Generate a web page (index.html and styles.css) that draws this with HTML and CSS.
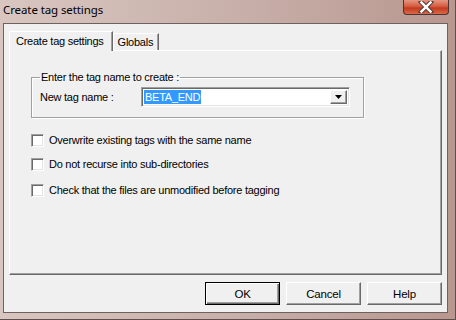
FILE: index.html
```html
<!DOCTYPE html>
<html lang="en">
<head>
  <meta charset="UTF-8">
  <title>Create tag settings</title>
  <link rel="stylesheet" href="styles.css">
</head>
<body>
  <div class="window">
    <div class="titlebar">
      <span class="title">Create tag settings</span>
      <span class="close">
        <svg width="16" height="12" viewBox="0 0 16 12">
          <path d="M3 1 L13 11 M13 1 L3 11" stroke="#4a3c3a" stroke-width="4.4" stroke-linecap="square"/>
          <path d="M3.4 1.4 L12.6 10.6 M12.6 1.4 L3.4 10.6" stroke="#fff" stroke-width="2.4" stroke-linecap="square"/>
        </svg>
      </span>
    </div>
    <div class="client">
      <div class="tabs">
        <div class="tab active">Create tag settings</div>
        <div class="tab">Globals</div>
      </div>
      <div class="panel">
        <fieldset class="group">
          <legend>Enter the tag name to create :</legend>
          <div class="field">
            <label>New tag name :</label>
            <div class="combo">
              <span class="value"><span class="selected">BETA_END</span></span>
              <span class="drop">
                <svg width="7" height="4" viewBox="0 0 7 4"><path d="M0 0 H7 L3.5 4 Z" fill="#000"/></svg>
              </span>
            </div>
          </div>
        </fieldset>
        <div class="checks">
          <label class="check"><span class="box"></span>Overwrite existing tags with the same name</label>
          <label class="check"><span class="box"></span>Do not recurse into sub-directories</label>
          <label class="check"><span class="box"></span>Check that the files are unmodified before tagging</label>
        </div>
      </div>
      <div class="buttons">
        <button class="default">OK</button>
        <button>Cancel</button>
        <button>Help</button>
      </div>
    </div>
  </div>
</body>
</html>
```

FILE: styles.css
```css
body {
  margin: 0;
  width: 456px;
  height: 320px;
  overflow: hidden;
  background: #fff;
  font-family: "Liberation Sans", Arial, sans-serif;
  font-size: 11px;
  letter-spacing: -0.25px;
  color: #000;
}
.window {
  box-sizing: border-box;
  width: 456px;
  height: 320px;
  padding: 0 7px 6px 3px;
  background: linear-gradient(to right, #d9c6c1, #c7aea8 55%, #b8978f);
  border-right: 1px solid #5f4e4b;
  border-bottom: 1px solid #5f4e4b;
  display: flex;
  flex-direction: column;
}
.titlebar {
  height: 24px;
  display: flex;
  justify-content: space-between;
  align-items: flex-start;
}
.title {
  font-family: "Noto Sans", sans-serif;
  font-size: 11.5px;
  letter-spacing: -0.1px;
  margin-top: 2px;
  color: #000;
}
.close {
  width: 46px;
  height: 16px;
  margin-top: -1px;
  margin-right: -1px;
  box-sizing: border-box;
  border: 1px solid #4c3432;
  border-top: none;
  border-radius: 0 0 4px 4px;
  background: linear-gradient(to bottom, #e8a08c, #d45a3e 50%, #c23a1e 60%, #d86a48);
  display: flex;
  justify-content: center;
  align-items: center;
}
.client {
  flex: 1;
  background: #f0f0f0;
  border: 1px solid #6e6260;
  padding: 7px 5px 7px 5px;
  display: flex;
  flex-direction: column;
}
.tabs {
  display: flex;
  align-items: flex-end;
  height: 19px;
}
.tab {
  box-sizing: border-box;
  height: 17px;
  padding: 1px 5px 0 4px;
  border-top: 1px solid #fff;
  border-left: 1px solid #fff;
  border-right: 1px solid #696969;
  box-shadow: inset -1px 0 #a0a0a0;
  background: #f0f0f0;
  line-height: 15px;
}
.tab.active {
  height: 20px;
  margin-bottom: -1px;
  padding: 2px 8px 0 6px;
  position: relative;
  z-index: 1;
}
.panel {
  height: 225px;
  box-sizing: border-box;
  border-top: 1px solid #fff;
  border-left: 1px solid #fff;
  border-right: 1px solid #696969;
  border-bottom: 1px solid #696969;
  box-shadow: inset -1px -1px #a0a0a0;
  padding: 20px 0 0 21px;
}
.group {
  box-sizing: border-box;
  width: 333px;
  height: 47px;
  margin: 0;
  padding: 4px 0 0 8px;
  border: 1px solid #a0a0a0;
  box-shadow: inset 1px 1px #fff, 1px 1px #fff;
}
.group legend {
  padding: 0 1px;
  margin-left: 0;
}
.field {
  display: flex;
  align-items: center;
}
.field label {
  width: 101px;
}
.combo {
  box-sizing: border-box;
  width: 209px;
  height: 20px;
  display: flex;
  background: #fff;
  border-top: 1px solid #a0a0a0;
  border-left: 1px solid #a0a0a0;
  border-right: 1px solid #fff;
  border-bottom: 1px solid #fff;
  box-shadow: inset 1px 1px #696969, inset -1px -1px #e3e3e3;
  padding: 2px;
}
.value {
  flex: 1;
  display: flex;
  align-items: center;
}
.selected {
  background: #3399ff;
  color: #fff;
  line-height: 14px;
  padding: 0 1px;
}
.drop {
  width: 17px;
  box-sizing: border-box;
  background: #f0f0f0;
  border-top: 1px solid #fff;
  border-left: 1px solid #fff;
  border-right: 1px solid #696969;
  border-bottom: 1px solid #696969;
  box-shadow: inset -1px -1px #a0a0a0;
  display: flex;
  justify-content: center;
  align-items: center;
}
.checks {
  display: flex;
  flex-direction: column;
  gap: 10px;
  margin-top: 15px;
}
.check {
  display: flex;
  align-items: center;
  gap: 5px;
  height: 14px;
}
.check:last-child {
  margin-top: 2px;
}
.box {
  width: 13px;
  height: 13px;
  box-sizing: border-box;
  background: #fff;
  border-top: 1px solid #a0a0a0;
  border-left: 1px solid #a0a0a0;
  border-right: 1px solid #fff;
  border-bottom: 1px solid #fff;
  box-shadow: inset 1px 1px #696969, inset -1px -1px #e3e3e3;
}
.buttons {
  display: flex;
  justify-content: flex-end;
  gap: 6px;
  margin-top: 7px;
}
.buttons button {
  box-sizing: border-box;
  width: 75px;
  height: 23px;
  font-family: "Liberation Sans", Arial, sans-serif;
  font-size: 11.5px;
  letter-spacing: -0.2px;
  color: #000;
  background: #f0f0f0;
  border-top: 1px solid #fff;
  border-left: 1px solid #fff;
  border-right: 1px solid #696969;
  border-bottom: 1px solid #696969;
  box-shadow: inset -1px -1px #a0a0a0;
  padding: 0;
}
.buttons button.default {
  border: 1px solid #000;
  box-shadow: inset 1px 1px #fff, inset -1px -1px #696969, inset -2px -2px #a0a0a0;
}
```
